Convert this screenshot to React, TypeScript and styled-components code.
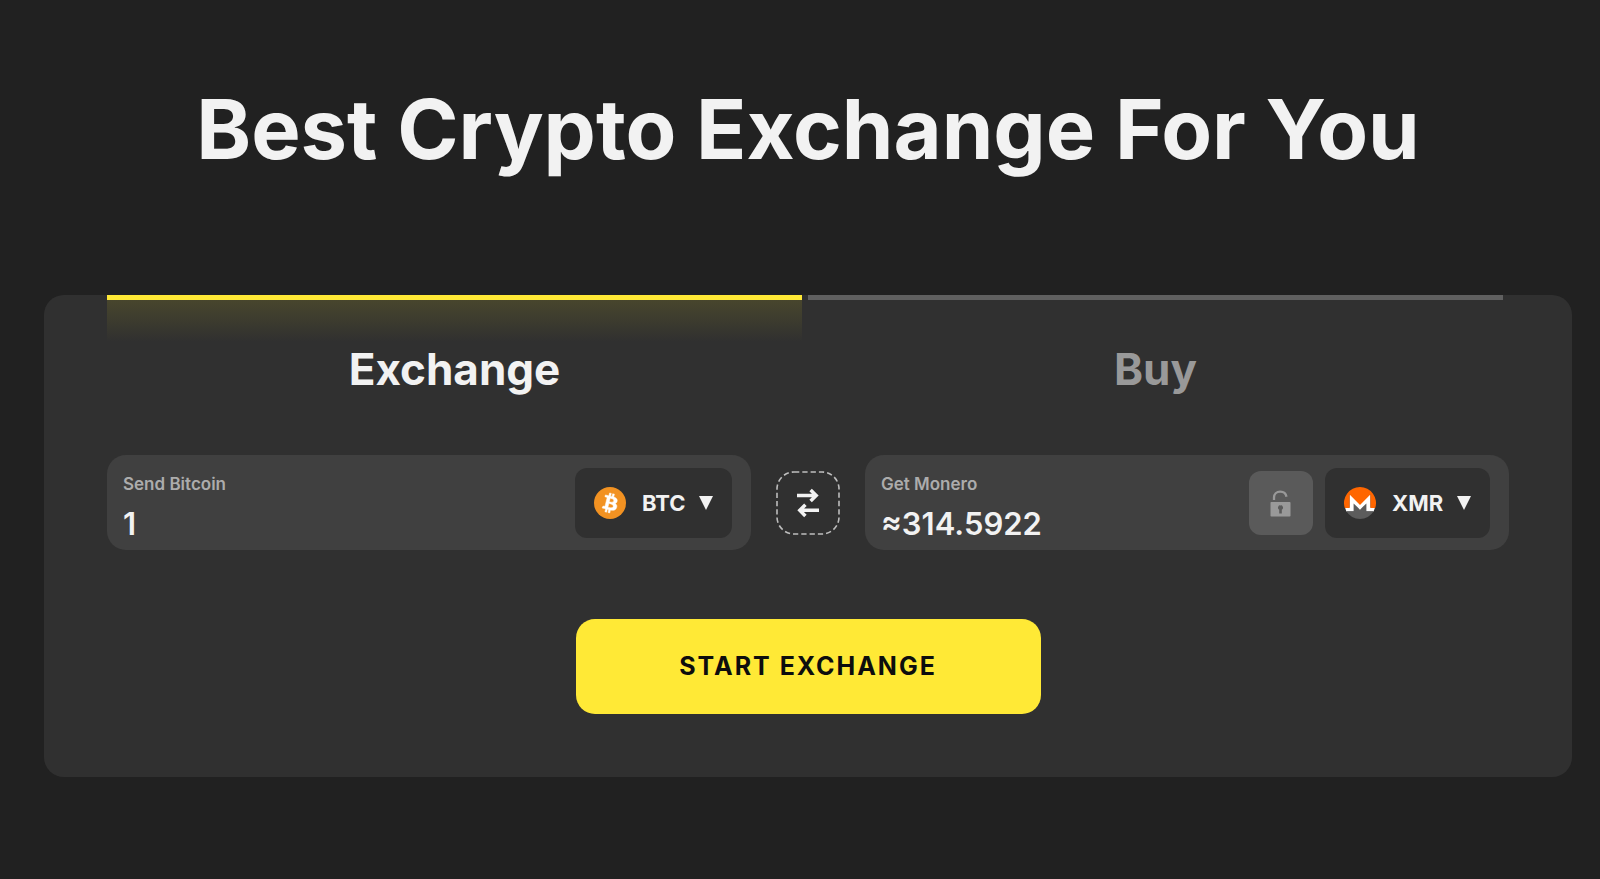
import React from "react";
import styled, { createGlobalStyle } from "styled-components";

const GlobalStyle = createGlobalStyle`
  * { box-sizing: border-box; }
  body { margin: 0; background: #212121; color: #f2f2f2; font-family: Inter, "Liberation Sans", sans-serif; }
  button, input, select { font: inherit; color: inherit; }
`;

const Page = styled.main`
  padding: 76px 28px 102px 44px;
`;

const Title = styled.h1`
  margin: 0 0 113px;
  text-align: center;
  font-size: 83px;
  line-height: 106px;
  font-weight: 700;
`;

const Card = styled.section`
  padding: 0 63px 63px;
  border-radius: 20px;
  background: #303030;
`;

const Tabs = styled.div`
  display: flex;
  gap: 6px;
  padding-right: 6px;
`;

const Tab = styled.button<{ $active?: boolean }>`
  flex: 1;
  height: 160px;
  padding: 0 0 18px;
  border: 0;
  border-top: 5px solid ${(p) => (p.$active ? "#ffe936" : "#606060")};
  background: ${(p) =>
    p.$active ? "linear-gradient(#48462d, #303030) 0 0 / 100% 42px no-repeat" : "transparent"};
  color: ${(p) => (p.$active ? "#f2f2f2" : "#999999")};
  font-size: 44px;
  font-weight: 700;
  cursor: pointer;
`;

const Form = styled.form`
  display: flex;
  flex-direction: column;
  align-items: center;
  gap: 69px;
`;

const Row = styled.div`
  display: flex;
  align-items: center;
  gap: 25px;
  width: 100%;
`;

const Field = styled.div`
  flex: 1;
  min-width: 0;
  display: flex;
  align-items: center;
  height: 95px;
  padding: 0 19px 0 16px;
  border-radius: 19px;
  background: #404040;
`;

const Amount = styled.div`
  flex: 1;
  min-width: 0;
  display: flex;
  flex-direction: column;
  gap: 10px;
  padding-top: 10px;
`;

const AmountLabel = styled.label`
  color: #acacac;
  font-size: 17px;
  line-height: 22px;
  font-weight: 600;
`;

const AmountInput = styled.input`
  width: 100%;
  height: 38px;
  padding: 0;
  border: 0;
  outline: 0;
  background: transparent;
  font-size: 31px;
  font-weight: 600;
`;

const LockButton = styled.button`
  display: grid;
  place-items: center;
  width: 64px;
  height: 64px;
  margin-right: 12px;
  padding: 0;
  border: 0;
  border-radius: 12px;
  background: #5a5a5a;
  cursor: pointer;
`;

const Currency = styled.label`
  display: flex;
  align-items: center;
  height: 70px;
  padding: 0 19px;
  border-radius: 12px;
  background: #303030;
`;

const CurrencySelect = styled.select`
  appearance: none;
  margin: 0 13px 0 16px;
  padding: 0;
  border: 0;
  outline: 0;
  background: transparent;
  font-size: 22px;
  font-weight: 700;
`;

const SwapButton = styled.button`
  display: grid;
  place-items: center;
  flex: none;
  width: 64px;
  height: 64px;
  padding: 0;
  border: 0;
  background: transparent;
  cursor: pointer;
`;

const StartButton = styled.button`
  width: 465px;
  max-width: 100%;
  height: 95px;
  padding: 0 0 2px;
  border: 0;
  border-radius: 19px;
  background: #ffe936;
  color: #0d0d0d;
  font-size: 25px;
  font-weight: 700;
  letter-spacing: 2px;
  text-transform: uppercase;
  cursor: pointer;
`;

const Caret = () => (
  <svg width="14" height="14" viewBox="0 0 14 14" aria-hidden="true">
    <path d="M0 0h14L7 14z" fill="#f2f2f2" />
  </svg>
);

const BitcoinIcon = () => (
  <svg width="32" height="32" viewBox="0 0 32 32" aria-hidden="true">
    <circle cx="16" cy="16" r="16" fill="#f29222" />
    <path
      fill="#fff"
      stroke="#fff"
      strokeWidth="0.5"
      d="M23.19 14.02c.31-2.1-1.28-3.23-3.47-3.98l.71-2.84-1.73-.43-.69 2.77c-.46-.11-.92-.22-1.39-.33l.7-2.79-1.73-.43-.71 2.84c-.37-.09-.74-.17-1.1-.26v-.01l-2.38-.6-.46 1.85s1.28.29 1.26.31c.7.18.82.64.8 1.01l-.81 3.24c.05.01.11.03.18.06l-.18-.05-1.13 4.54c-.09.21-.3.53-.79.41.02.02-1.26-.31-1.26-.31l-.86 1.98 2.25.56c.42.1.83.21 1.23.32l-.71 2.87 1.72.43.71-2.84c.47.13.93.25 1.38.36l-.71 2.83 1.73.43.71-2.87c2.95.56 5.17.33 6.1-2.34.75-2.15-.04-3.39-1.59-4.19 1.13-.26 1.98-1.01 2.21-2.54zm-3.95 5.54c-.53 2.15-4.15.99-5.32.7l.95-3.81c1.17.3 4.93.87 4.37 3.11zm.54-5.57c-.49 1.95-3.5.96-4.48.72l.86-3.46c.98.24 4.12.7 3.62 2.74z"
    />
  </svg>
);

const MoneroIcon = () => (
  <svg width="32" height="32" viewBox="0 0 32 32" aria-hidden="true">
    <path fill="#fff" d="M1 20.5H31L29.6 24.6H2.4zM5.5 7.5h21v14h-21z" />
    <path
      fill="#ff6600"
      d="M16 0A16 16 0 0 0 .82 21.06H5.61V7.6L16 17.98 26.39 7.6v13.46h4.79A16 16 0 0 0 16 0z"
    />
    <path
      fill="#5c5c5c"
      d="M13.62 20.36 9.6 16.4v7.89H2.33a16 16 0 0 0 27.34 0H22.4V16.4l-4.02 3.96L16 22.74z"
    />
  </svg>
);

const LockIcon = () => (
  <svg width="22" height="28" viewBox="0 0 22 28" aria-hidden="true">
    <path d="M4 11V8.5C4 5 6.5 2.6 10.2 2.6c3.5 0 5.8 2 6.3 5.2" fill="none" stroke="#999" strokeWidth="2.3" />
    <path
      fill="#999"
      fillRule="evenodd"
      d="M1.2 13h18.6q.7 0 .7.7v13q0 .7-.7.7H1.2q-.7 0-.7-.7v-13q0-.7.7-.7zM10.5 16a2.6 2.6 0 0 0-1.3 4.8v3.7h2.6v-3.7a2.6 2.6 0 0 0-1.3-4.8z"
    />
  </svg>
);

const SwapIcon = () => (
  <svg width="64" height="64" viewBox="0 0 64 64" fill="none" aria-hidden="true">
    <rect x="1" y="1" width="62" height="62" rx="17" stroke="#bdbdbd" strokeWidth="1.6" strokeDasharray="5.3 3" />
    <path d="M21 24.5h19.5M34.6 18.9l5.6 5.6-5.6 5.6M43 39.3H23.5M29.4 33.7l-5.6 5.6 5.6 5.6" stroke="#f2f2f2" strokeWidth="3.5" />
  </svg>
);

export default function App() {
  return (
    <>
      <GlobalStyle />
      <Page>
        <Title>Best Crypto Exchange For You</Title>
        <Card>
          <Tabs role="tablist">
            <Tab type="button" role="tab" aria-selected="true" $active>Exchange</Tab>
            <Tab type="button" role="tab" aria-selected="false">Buy</Tab>
          </Tabs>
          <Form onSubmit={(e) => e.preventDefault()}>
            <Row>
              <Field>
                <Amount>
                  <AmountLabel htmlFor="send">Send Bitcoin</AmountLabel>
                  <AmountInput id="send" defaultValue="1" />
                </Amount>
                <Currency>
                  <BitcoinIcon />
                  <CurrencySelect aria-label="Send currency">
                    <option>BTC</option>
                  </CurrencySelect>
                  <Caret />
                </Currency>
              </Field>
              <SwapButton type="button" aria-label="Swap currencies">
                <SwapIcon />
              </SwapButton>
              <Field>
                <Amount>
                  <AmountLabel htmlFor="get">Get Monero</AmountLabel>
                  <AmountInput id="get" defaultValue="≈314.5922" readOnly />
                </Amount>
                <LockButton type="button" aria-label="Fix the rate">
                  <LockIcon />
                </LockButton>
                <Currency>
                  <MoneroIcon />
                  <CurrencySelect aria-label="Get currency">
                    <option>XMR</option>
                  </CurrencySelect>
                  <Caret />
                </Currency>
              </Field>
            </Row>
            <StartButton type="submit">Start exchange</StartButton>
          </Form>
        </Card>
      </Page>
    </>
  );
}
